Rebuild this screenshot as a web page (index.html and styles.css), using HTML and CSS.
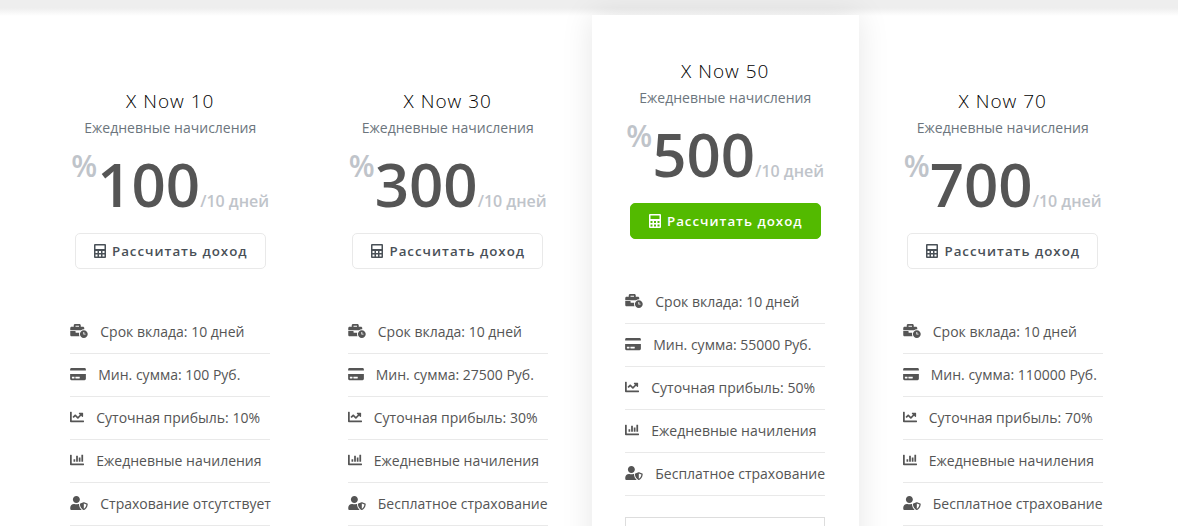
FILE: index.html
```
<!DOCTYPE html>
<html lang="ru">
  <head>
    <meta charset="utf-8" />
    <title>X Now - Тарифы</title>
    <link rel="stylesheet" href="styles.css">
  </head>
  <body>
    <svg class="sprite" aria-hidden="true">
      <symbol id="i-calc" viewBox="0 0 14 16">
        <path fill-rule="evenodd" d="M2 1h10q1 0 1 1v12q0 1-1 1H2q-1 0-1-1V2q0-1 1-1zM2.500 2.500V6h9V2.500zM2.500 8v2h2V8zM6 8v2h2V8zM9.500 8v2h2V8zM2.500 11.500v2h2v-2zM6 11.500v2h2v-2zM9.500 11.500v2h2v-2z"/>
      </symbol>
      <symbol id="i-time" viewBox="0 0 640 512">
        <path d="M496 224c-79.590 0-144 64.410-144 144s64.410 144 144 144 144-64.410 144-144-64.410-144-144-144zm64 150.290c0 5.340-4.370 9.710-9.710 9.710h-60.570c-5.340 0-9.710-4.370-9.710-9.710v-76.570c0-5.340 4.370-9.710 9.710-9.710h12.570c5.340 0 9.710 4.370 9.710 9.710V352h38.290c5.340 0 9.710 4.370 9.710 9.710v12.580zM496 192c5.400 0 10.720.33 16 .81V144c0-25.600-22.400-48-48-48h-80V48c0-25.600-22.400-48-48-48H176c-25.600 0-48 22.400-48 48v48H48c-25.600 0-48 22.400-48 48v80h395.120c28.600-20.090 63.350-32 100.880-32zM320 96H192V64h128v32zm6.820 224H208c-8.840 0-16-7.160-16-16v-48H0v144c0 25.600 22.400 48 48 48h291.430C327.100 423.960 320 396.820 320 368c0-16.660 2.480-32.720 6.820-48z"/>
      </symbol>
      <symbol id="i-card" viewBox="0 0 576 512">
        <path d="M0 432c0 26.500 21.500 48 48 48h480c26.500 0 48-21.500 48-48V256H0v176zm192-68c0-6.600 5.400-12 12-12h136c6.600 0 12 5.400 12 12v40c0 6.600-5.400 12-12 12H204c-6.600 0-12-5.400-12-12v-40zm-128 0c0-6.600 5.400-12 12-12h72c6.600 0 12 5.400 12 12v40c0 6.600-5.400 12-12 12H76c-6.600 0-12-5.400-12-12v-40zM576 80v48H0V80c0-26.500 21.500-48 48-48h480c26.500 0 48 21.500 48 48z"/>
      </symbol>
      <symbol id="i-line" viewBox="0 0 512 512">
        <path d="M496 384H64V80c0-8.840-7.160-16-16-16H16C7.160 64 0 71.160 0 80v336c0 17.670 14.330 32 32 32h464c8.840 0 16-7.160 16-16v-32c0-8.840-7.160-16-16-16zM464 96H345.940c-21.380 0-32.090 25.850-16.970 40.970l32.400 32.400L288 242.750l-73.370-73.370c-12.500-12.500-32.760-12.500-45.250 0l-68.690 68.690c-6.250 6.250-6.250 16.380 0 22.630l22.620 22.620c6.250 6.250 16.380 6.250 22.630 0L192 237.250l73.370 73.370c12.500 12.500 32.760 12.500 45.250 0l96-96 32.400 32.400c15.120 15.120 40.970 4.410 40.970-16.970V112c.01-8.840-7.150-16-15.990-16z"/>
      </symbol>
      <symbol id="i-bar" viewBox="0 0 512 512">
        <path d="M332.800 320h38.400c6.400 0 12.800-6.400 12.800-12.800V172.800c0-6.400-6.400-12.800-12.800-12.800h-38.400c-6.400 0-12.800 6.400-12.800 12.800v134.400c0 6.400 6.400 12.800 12.800 12.800zm96 0h38.400c6.400 0 12.800-6.400 12.800-12.800V76.800c0-6.400-6.400-12.800-12.800-12.800h-38.400c-6.400 0-12.800 6.400-12.800 12.800v230.400c0 6.400 6.400 12.800 12.800 12.800zm-288 0h38.400c6.400 0 12.800-6.400 12.800-12.800v-70.400c0-6.400-6.400-12.800-12.800-12.800h-38.400c-6.400 0-12.800 6.400-12.800 12.800v70.400c0 6.400 6.400 12.800 12.800 12.800zm96 0h38.400c6.400 0 12.800-6.400 12.800-12.800V108.800c0-6.400-6.400-12.800-12.800-12.800h-38.400c-6.400 0-12.800 6.400-12.800 12.800v198.400c0 6.400 6.400 12.800 12.800 12.800zM496 384H64V80c0-8.840-7.160-16-16-16H16C7.160 64 0 71.160 0 80v336c0 17.670 14.330 32 32 32h464c8.840 0 16-7.160 16-16v-32c0-8.840-7.160-16-16-16z"/>
      </symbol>
      <symbol id="i-shield" viewBox="0 0 640 512">
        <path d="M622.300 271.100l-115.200-45c-4.100-1.600-12.600-3.700-22.200 0l-115.200 45c-10.700 4.200-17.700 14-17.700 24.900 0 111.600 68.700 188.800 132.900 213.900 9.600 3.700 18 1.600 22.200 0C558.400 489.900 640 420.500 640 296c0-10.900-7-20.700-17.700-24.900zM496 462.400V273.300l95.500 37.300c-5.600 87.100-60.900 135.400-95.500 151.800zM224 256c70.700 0 128-57.300 128-128S294.700 0 224 0 96 57.300 96 128s57.300 128 128 128zm96 40c0-2.500.8-4.800 1.100-7.200-2.500-.1-4.900-.8-7.500-.8h-16.700c-22.200 10.200-46.900 16-72.900 16s-50.600-5.800-72.900-16h-16.700C60.200 288 0 348.200 0 422.400V464c0 26.500 21.500 48 48 48h352c6.800 0 13.300-1.500 19.200-4-54-42.900-99.200-116.700-99.200-212z"/>
      </symbol>
    </svg>

    <main class="pricing">
      <section class="plan">
        <h2 class="plan-name">X Now 10</h2>
        <p class="plan-desc">Ежедневные начисления</p>
        <p class="price"><span class="price-sign">%</span><span class="price-num">100</span><span class="price-term">/10 дней</span></p>
        <button type="button" class="btn"><svg class="btn-icon"><use href="#i-calc"/></svg>Рассчитать доход</button>
        <ul class="features">
          <li><svg class="icon icon-lg"><use href="#i-time"/></svg>Срок вклада: 10 дней</li>
          <li><svg class="icon icon-md"><use href="#i-card"/></svg>Мин. сумма: 100 Руб.</li>
          <li><svg class="icon"><use href="#i-line"/></svg>Суточная прибыль: 10%</li>
          <li><svg class="icon"><use href="#i-bar"/></svg>Ежедневные начиления</li>
          <li><svg class="icon icon-lg"><use href="#i-shield"/></svg>Страхование отсутствует</li>
        </ul>
      </section>

      <section class="plan">
        <h2 class="plan-name">X Now 30</h2>
        <p class="plan-desc">Ежедневные начисления</p>
        <p class="price"><span class="price-sign">%</span><span class="price-num">300</span><span class="price-term">/10 дней</span></p>
        <button type="button" class="btn"><svg class="btn-icon"><use href="#i-calc"/></svg>Рассчитать доход</button>
        <ul class="features">
          <li><svg class="icon icon-lg"><use href="#i-time"/></svg>Срок вклада: 10 дней</li>
          <li><svg class="icon icon-md"><use href="#i-card"/></svg>Мин. сумма: 27500 Руб.</li>
          <li><svg class="icon"><use href="#i-line"/></svg>Суточная прибыль: 30%</li>
          <li><svg class="icon"><use href="#i-bar"/></svg>Ежедневные начиления</li>
          <li><svg class="icon icon-lg"><use href="#i-shield"/></svg>Бесплатное страхование</li>
        </ul>
      </section>

      <section class="plan plan-featured">
        <h2 class="plan-name">X Now 50</h2>
        <p class="plan-desc">Ежедневные начисления</p>
        <p class="price"><span class="price-sign">%</span><span class="price-num">500</span><span class="price-term">/10 дней</span></p>
        <button type="button" class="btn btn-green"><svg class="btn-icon"><use href="#i-calc"/></svg>Рассчитать доход</button>
        <ul class="features">
          <li><svg class="icon icon-lg"><use href="#i-time"/></svg>Срок вклада: 10 дней</li>
          <li><svg class="icon icon-md"><use href="#i-card"/></svg>Мин. сумма: 55000 Руб.</li>
          <li><svg class="icon"><use href="#i-line"/></svg>Суточная прибыль: 50%</li>
          <li><svg class="icon"><use href="#i-bar"/></svg>Ежедневные начиления</li>
          <li><svg class="icon icon-lg"><use href="#i-shield"/></svg>Бесплатное страхование</li>
        </ul>
        <div class="plan-note"></div>
      </section>

      <section class="plan">
        <h2 class="plan-name">X Now 70</h2>
        <p class="plan-desc">Ежедневные начисления</p>
        <p class="price"><span class="price-sign">%</span><span class="price-num">700</span><span class="price-term">/10 дней</span></p>
        <button type="button" class="btn"><svg class="btn-icon"><use href="#i-calc"/></svg>Рассчитать доход</button>
        <ul class="features">
          <li><svg class="icon icon-lg"><use href="#i-time"/></svg>Срок вклада: 10 дней</li>
          <li><svg class="icon icon-md"><use href="#i-card"/></svg>Мин. сумма: 110000 Руб.</li>
          <li><svg class="icon"><use href="#i-line"/></svg>Суточная прибыль: 70%</li>
          <li><svg class="icon"><use href="#i-bar"/></svg>Ежедневные начиления</li>
          <li><svg class="icon icon-lg"><use href="#i-shield"/></svg>Бесплатное страхование</li>
        </ul>
      </section>
    </main>
  </body>
</html>
```
FILE: styles.css
```
* {
  box-sizing: border-box;
}

body {
  margin: 0;
  padding-right: 5px;
  font-family: "Open Sans", sans-serif;
  font-size: 14px;
  color: #555555;
  background: linear-gradient(#eeeeee 8px, #ffffff 16px) no-repeat #ffffff;
}

.sprite {
  display: none;
}

.pricing {
  display: flex;
  align-items: flex-start;
  max-width: 1110px;
  margin: 0 auto;
  padding-top: 15px;
}

.plan {
  flex: 1;
  display: flex;
  flex-direction: column;
  align-items: center;
  margin: 30px 5px 0;
  padding: 40px 32px;
}

.plan-featured {
  margin-top: 0;
  background: #ffffff;
  box-shadow: 0 0 30px rgba(0, 0, 0, 0.1);
}

.plan-name {
  margin: 0;
  font-size: 19px;
  font-weight: 300;
  line-height: 32px;
  letter-spacing: 1px;
  color: #000000;
}

.plan-desc {
  margin: 0;
  line-height: 22px;
  color: #6c757d;
  font-size: 14px;
}

.price {
  display: flex;
  margin: 0;
  font-weight: 600;
  line-height: 64px;
  padding-top: 13px;
  align-items: baseline;
  white-space: nowrap;
}

.price-sign {
  align-self: flex-start;
  font-size: 30px;
  line-height: 28px;
  color: #bfc4ca;
}

.price-num {
  font-size: 60px;
}

.price-term {
  font-size: 16px;
  color: #bfc4ca;
}

.btn {
  display: flex;
  align-items: center;
  justify-content: center;
  height: 36px;
  padding: 0 17px;
  border: 1px solid #e9e9e9;
  border-radius: 5px;
  background: #ffffff;
  color: #495057;
  font-family: inherit;
  font-weight: 600;
  letter-spacing: 1px;
  white-space: nowrap;
}

.btn-green {
  border-color: #53ba00;
  background: #53ba00;
  color: #ffffff;
}

.btn-icon {
  width: 14px;
  height: 16px;
  margin-right: 5px;
  fill: currentColor;
}

.features {
  width: 200px;
  margin: 42px 0 0;
  padding: 0;
  list-style: none;
}

.features li {
  display: flex;
  align-items: center;
  height: 43px;
  padding-bottom: 2px;
  border-bottom: 1px solid #e9e9e9;
  white-space: nowrap;
}

.icon {
  flex: none;
  width: 14px;
  height: 14px;
  margin-right: 12px;
  fill: currentColor;
}

.icon-md {
  width: 16px;
}

.icon-lg {
  width: 18px;
}

.plan-note {
  width: 200px;
  height: 48px;
  margin-top: 21px;
  border: 1px solid #dddddd;
}
```
